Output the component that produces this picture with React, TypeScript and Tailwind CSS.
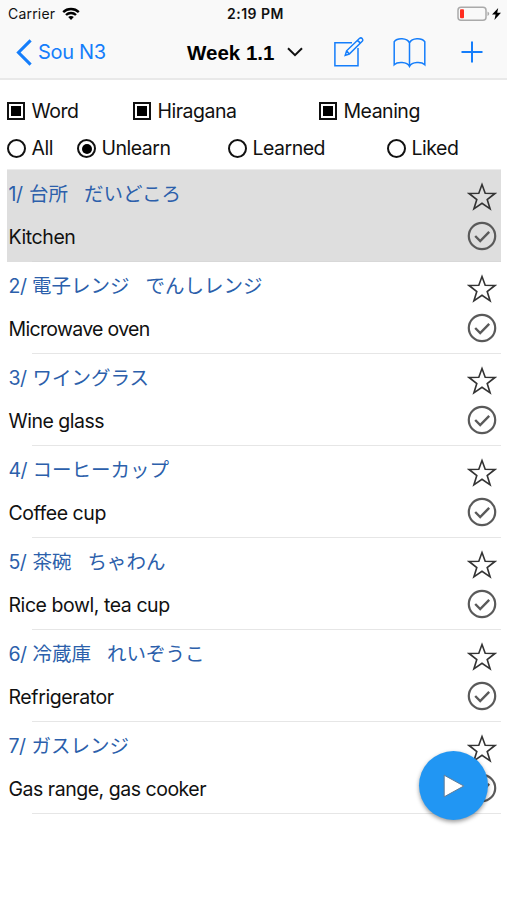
const words = [
  { n: 1, word: "台所", reading: "だいどころ", meaning: "Kitchen", pad: "w-[20.5px]", track: "tracking-[-0.42px]" },
  { n: 2, word: "電子レンジ", reading: "でんしレンジ", meaning: "Microwave oven", pad: "w-[23.5px]", track: "tracking-[-0.68px]" },
  { n: 3, word: "ワイングラス", reading: "", meaning: "Wine glass", pad: "w-[24px]", track: "tracking-[-0.5px]" },
  { n: 4, word: "コーヒーカップ", reading: "", meaning: "Coffee cup", pad: "w-[24px]", track: "tracking-[-0.45px]" },
  { n: 5, word: "茶碗", reading: "ちゃわん", meaning: "Rice bowl, tea cup", pad: "w-[24px]", track: "tracking-[-0.44px]" },
  { n: 6, word: "冷蔵庫", reading: "れいぞうこ", meaning: "Refrigerator", pad: "w-[24px]", track: "tracking-[-0.4px]" },
  { n: 7, word: "ガスレンジ", reading: "", meaning: "Gas range, gas cooker", pad: "w-[23px]", track: "tracking-[-0.48px]" },
];

function Star() {
  return (
    <svg width="30" height="30" viewBox="0 0 30 30" fill="none" stroke="#333" strokeWidth="1.6" strokeLinejoin="miter">
      <path d="M15 2.5L18.2 11.3L27.9 11.5L20.2 17.5L23.1 26.9L15 21.3L6.9 26.9L9.8 17.5L2.1 11.5L11.8 11.3Z" />
    </svg>
  );
}

function Tick() {
  return (
    <svg width="30" height="30" viewBox="0 0 30 30" fill="none" stroke="#5a5a5a">
      <circle cx="15" cy="15" r="13.2" strokeWidth="2.2" />
      <path d="M8.2 15L13.2 20L22.2 10.8" strokeWidth="2.4" />
    </svg>
  );
}

function Check({ label, width }: { label: string; width: string }) {
  return (
    <div className={`flex items-center gap-[6.5px] ${width}`}>
      <span className="flex size-[18px] items-center justify-center border-2 border-[#111]">
        <span className="size-[10px] bg-black" />
      </span>
      <span>{label}</span>
    </div>
  );
}

function Radio({ label, width, on = false }: { label: string; width: string; on?: boolean }) {
  return (
    <div className={`flex items-center gap-[5.5px] ${width}`}>
      <span className="flex size-[19px] items-center justify-center rounded-full border-2 border-[#111]">
        {on && <span className="size-[10px] rounded-full bg-black" />}
      </span>
      <span className="pt-px">{label}</span>
    </div>
  );
}

export default function App() {
  return (
    <div className="relative h-[900px] w-[507px] overflow-hidden bg-white font-[Inter,'Noto_Sans_CJK_JP',sans-serif] text-[19.5px] tracking-[-0.5px] text-[#111]">
      <header className="h-[80px] border-b-2 border-[#e9e9e9] bg-[#f9f9f9]">
        <div className="flex h-[27px] items-center pr-[6px] pl-[8px] text-[14px] leading-[27px]">
          <div className="flex w-[219px] items-center gap-[8px]">
            <span className="w-[46px] tracking-[0.2px] whitespace-nowrap">Carrier</span>
            <svg width="18" height="14" viewBox="0 0 18 14" fill="none" stroke="#000" strokeWidth="2.4">
              <path d="M1.2 5.1C5.5 .9 12.5 .9 16.8 5.1" />
              <path d="M4 8C6.8 5.3 11.2 5.3 14 8" />
              <path d="M6.2 10.1C7.8 8.6 10.2 8.6 11.8 10.1L9 13Z" fill="#000" stroke="none" />
            </svg>
          </div>
          <span className="font-semibold tracking-[0.5px]">2:19 PM</span>
          <div className="ml-auto flex items-center gap-[2px]">
            <svg width="33" height="16" viewBox="0 0 33 16">
              <rect x="1" y="1.2" width="28" height="13" rx="3" fill="none" stroke="#aaa" strokeWidth="1.5" />
              <rect x="3" y="3.2" width="4" height="9" rx="1" fill="#ff2d20" />
              <path d="M30.5 5.5Q34 7.7 30.5 10Z" fill="#aaa" />
            </svg>
            <svg width="9" height="14" viewBox="0 0 9 14"><path d="M6.2 1L0 7.5H3.6L2.4 13L9 5.7H5.2Z" /></svg>
          </div>
        </div>
        <div className="flex h-[50px] items-center pl-[16px]">
          <div className="flex w-[171px] items-center gap-[6px] text-[#157efb]">
            <svg width="16" height="27" viewBox="0 0 16 27" fill="none" stroke="currentColor" strokeWidth="3.1"><path d="M14.6 1.4L2.5 13.5L14.6 25.6" /></svg>
            <span className="text-[20px] tracking-[-0.3px]">Sou N3</span>
          </div>
          <div className="flex w-[147px] items-center gap-[12px] whitespace-nowrap">
            <span className="w-[88px] pt-[2px] font-['Liberation_Sans',sans-serif] text-[20.5px] font-bold tracking-normal text-black">Week 1.1</span>
            <svg width="16" height="10" viewBox="0 0 16 10" fill="none" stroke="#111" strokeWidth="2"><path d="M1 1.2L8 8.2L15 1.2" /></svg>
          </div>
          <svg width="30" height="30" viewBox="0 0 30 30" fill="none" stroke="#157efb" strokeWidth="1.5">
            <path d="M18 5.7H.9V28.7H24V11" />
            <path d="M11.2 18.4L12.6 13.8L25.6 1.3Q27 .3 28.2 1.6Q29.3 3 28.2 4.2L15.3 17L11.2 18.4ZM12.6 13.8L15.3 17M23.6 3.4L26.3 6.1" />
          </svg>
          <svg className="ml-[29px]" width="33" height="31" viewBox="0 0 33 31" fill="none" stroke="#157efb" strokeWidth="1.5">
            <path d="M16.5 5.8C14 .8 4.4 .5 1.2 4.7V27.8C4.5 24.5 14 24.7 16.5 29.5C19 24.7 28.5 24.5 31.8 27.8V4.7C28.6 .5 19 .8 16.5 5.8V29.5" />
          </svg>
          <svg className="ml-[35px]" width="22" height="22" viewBox="0 0 22 22" stroke="#157efb" strokeWidth="2"><path d="M11 .5V21.5M.5 11H21.5" /></svg>
        </div>
      </header>

      <div className="flex h-[43px] items-end pb-[1px] pl-[7px] leading-[22px]">
        <Check label="Word" width="w-[126px]" />
        <Check label="Hiragana" width="w-[186px]" />
        <Check label="Meaning" width="w-[120px]" />
      </div>
      <div className="flex h-[46px] items-center pt-[5px] pl-[7px]">
        <Radio label="All" width="w-[70px]" />
        <Radio label="Unlearn" width="w-[151px]" on />
        <Radio label="Learned" width="w-[159px]" />
        <Radio label="Liked" width="w-[90px]" />
      </div>

      <ul className="mr-[6px] ml-[7px] border-t border-[#ececec]">
        {words.map((w) => (
          <li key={w.n} className={`h-[92px] ${w.n === 1 ? "bg-[#dedede]" : ""}`}>
            <div className="flex h-[91px] justify-between pr-[4px] pl-[1.5px]">
              <div>
                <div className="flex h-[50px] items-center whitespace-nowrap text-[#2c5fab]">
                  <span className={w.pad}>{w.n}/</span>
                  <span className="pb-px tracking-normal">{w.word}</span>
                  <span className="ml-[16px] pb-px tracking-normal">{w.reading}</span>
                </div>
                <div className={`flex h-[36px] items-center ${w.track}`}>{w.meaning}</div>
              </div>
              <div className="flex flex-col gap-[9px] pt-[12px]">
                <Star />
                <Tick />
              </div>
            </div>
            <div className={`ml-[25px] h-px ${w.n === 1 ? "bg-[#d8d8d8]" : "bg-[#e6e6e6]"}`} />
          </li>
        ))}
      </ul>

      <button className="absolute top-[751px] left-[419px] flex size-[69px] items-center justify-center rounded-full bg-[#2196f3] shadow-[0_2px_4px_rgba(0,0,0,0.4)]">
        <svg width="22" height="24" viewBox="0 0 22 24"><path d="M1.2 1.2V22.8L20.8 12Z" fill="#fff" stroke="#607d98" strokeWidth="1" /></svg>
      </button>
    </div>
  );
}
